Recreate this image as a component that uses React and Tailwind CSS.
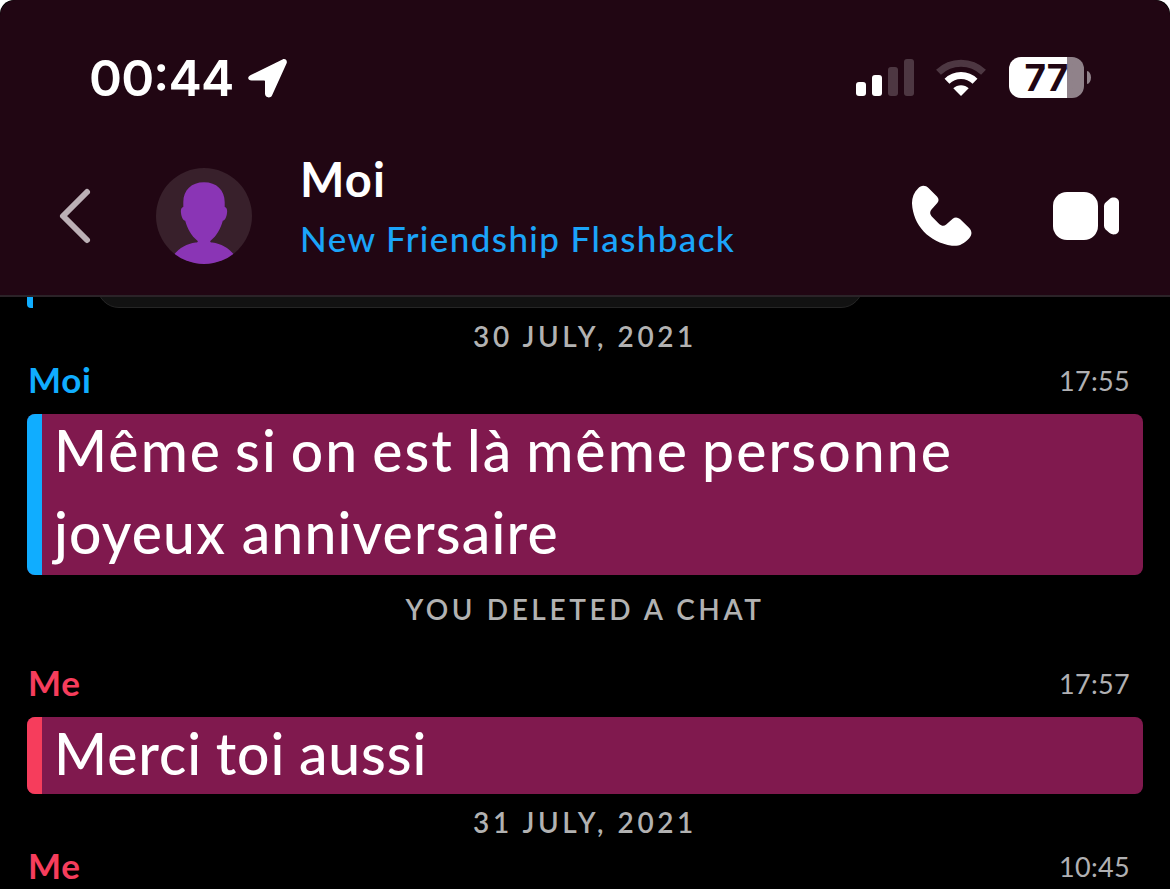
function StatusBar() {
    return (
        <div className="flex h-[148px] items-start pt-[54px] pr-[79px] pl-[89px]">
            <span className="h-12 w-[144px] font-['Inter','Liberation_Sans',sans-serif] text-[50px] leading-[48px] font-semibold tracking-[-0.8px] text-white [font-feature-settings:'case']">
                00:44
            </span>
            <svg className="mt-[4px] ml-[14px] h-[41px] w-[41px]" viewBox="0 0 41 41" fill="#fff">
                <path d="M3.800 17 35.500 1.400c2.900-1.200 5.300 1.200 4 4.100L25 37.400c-1.600 3.300-7 2.300-7-1.600V23.300c0-.5-.3-.8-.8-.8H4.600C.6 22.500-.1 18.700 3.800 17Z" />
            </svg>
            <div className="ml-auto flex items-start">
                <svg className="mt-[4px] h-[40px] w-[60px]" viewBox="0 0 60 40" fill="#fff">
                    <rect x="1" y="24" width="10" height="14" rx="3" />
                    <rect x="17" y="17" width="10" height="21" rx="3" />
                    <rect x="33" y="9" width="10" height="29" rx="3" opacity=".2" />
                    <rect x="49" y="1" width="10" height="37" rx="3" opacity=".2" />
                </svg>
                <svg className="mt-[4px] ml-[20px] h-[40px] w-[52px]" viewBox="0 0 52 40" fill="none" stroke="#fff">
                    <path d="M3.500 14.200a32.500 32.500 0 0 1 45 0" strokeWidth="7" opacity=".2" />
                    <path d="M12 23.200a20 20 0 0 1 28 0" strokeWidth="7" />
                    <path d="M26 38 18.300 30.300c4.200-4.100 11.200-4.100 15.400 0Z" fill="#fff" stroke="none" />
                </svg>
                <div className="mt-[3px] ml-[22px] flex items-center">
                    <div className="flex h-[41px] w-[75px] items-center justify-center rounded-[12px] bg-linear-to-r from-white from-[77.500%] to-[#90828a] to-[77.500%]">
                        <span className="font-['Inter','Liberation_Sans',sans-serif] text-[37px] leading-none font-bold text-[#210613]">77</span>
                    </div>
                    <div className="ml-[3px] h-[13px] w-[4px] rounded-[0_100%_100%_0/0_50%_50%_0] bg-[#90828a]" />
                </div>
            </div>
        </div>
    )
}

function ChatHeader() {
    return (
        <div className="flex h-[147px] pl-[58px]">
            <svg className="mt-[38px] h-[60px] w-[34px]" viewBox="0 0 34 60" fill="none" stroke="#bcb0b6" strokeWidth="6" strokeLinecap="round" strokeLinejoin="round">
                <path d="M29 6 5 30l24 24" />
            </svg>
            <svg className="mt-[20px] ml-[64px] h-24 w-24" viewBox="0 0 96 96">
                <defs>
                    <clipPath id="avatar">
                        <circle cx="48" cy="48" r="48" />
                    </clipPath>
                </defs>
                <g clipPath="url(#avatar)">
                    <rect width="96" height="96" fill="#38202b" />
                    <path
                        fill="#8a35b5"
                        d="M48 14.200c12.500 0 20.700 7.800 20.700 19.800v5c2.300.8 2.700 3 2.300 6-.4 4-2 7.300-4.200 7.800C64.500 61 61 67.500 54.300 73c-.3 1 .5 1.300 2 1.500C65 75.500 72.500 80 78 86.500V96H18v-9.500c5.500-6.500 13-11 21.700-12 1.500-.2 2.300-.5 2-1.500C35 67.500 31.500 61 29.200 52.800c-2.200-.5-3.800-3.800-4.200-7.800-.4-3 0-5.200 2.300-6v-5c0-12 8.200-19.800 20.700-19.800Z"
                    />
                </g>
            </svg>
            <div className="ml-[48px] flex flex-col">
                <span className="mt-[3px] h-[56px] text-[47px] leading-[56px] font-bold tracking-[1.100px] text-white">Moi</span>
                <span className="mt-[10px] h-[42px] text-[35px] leading-[42px] font-medium tracking-[1.400px] whitespace-nowrap text-[#1ba4f9]">
                    New Friendship Flashback
                </span>
            </div>
            <div className="mr-[50px] ml-auto flex">
                <svg className="mt-[37px] h-[62px] w-[62px]" viewBox="0 0 62 62" fill="#fff">
                    <path d="M7 3.500C10-.2 14.500 0 17.500 3L26 11.500c2 2.300 2 4.500.3 6.600l-5.800 6.400c-1.800 2.200-1.800 4.300.3 7l7.400 7.400c2.700 2.300 4.800 2.300 7 .5l6.500-5.600c2.200-1.700 4.800-1.700 7.300.3l9 8.700c3 3 3.500 7 0 10.600-5.500 5.800-10.500 8.100-17 7.300C18 57.500 2 40 1 18.500.9 12.500 3 7.500 7 3.500Z" />
                </svg>
                <svg className="mt-[43px] ml-[79px] h-[50px] w-[68px]" viewBox="0 0 68 50" fill="#fff">
                    <rect x="1" y="1" width="45" height="48" rx="14" />
                    <path d="M52 15.500c0-1.500.5-2.800 1.600-3.900l4-3.700C61 5.300 67 6.500 67 11.500v27c0 5-6 6.200-9.400 3.600l-4-3.700c-1.100-1.100-1.600-2.400-1.600-3.900Z" />
                </svg>
            </div>
        </div>
    )
}

function Notice({ children }) {
    return (
        <div className="flex h-14 items-center justify-center text-[28px] leading-none font-semibold tracking-[3.600px] text-[#b2b2b2]">
            <span className="-mt-px">{children}</span>
        </div>
    )
}

function Sender({ name, time, color }) {
    return (
        <div className="mb-4 flex h-[34px] items-center justify-between pr-[40px] pl-[28px]">
            <span className={`-mt-[4px] text-[35px] leading-[34px] font-bold tracking-[0.700px] ${color}`}>{name}</span>
            <span className="text-[27px] leading-[34px] tracking-[0.300px] text-[#b0b0b3]">{time}</span>
        </div>
    )
}

function Message({ bar, size, children }) {
    return (
        <div className={`mr-[27px] ml-[27px] flex overflow-hidden rounded-[8px] bg-[#80194e] ${size}`}>
            <div className={`w-[15px] shrink-0 ${bar}`} />
            <div className="-mt-[5px] ml-[12px] text-[57px] leading-[82px] font-medium whitespace-nowrap text-white">{children}</div>
        </div>
    )
}

export default function App() {
    return (
        <div className="h-[889px] w-[1170px] overflow-hidden bg-white font-['Lato','Liberation_Sans',sans-serif]">
            <div className="h-full overflow-hidden rounded-t-[14px] bg-black">
                <header className="h-[297px] rounded-t-[16px] border-b-2 border-[#2b2328] bg-[#210613]">
                    <StatusBar />
                    <ChatHeader />
                </header>
                <div className="flex h-[11px] items-end overflow-hidden">
                    <div className="ml-[27px] h-[11px] w-[6px] rounded-bl-[4px] bg-[#10adff]" />
                    <div className="-mt-[50px] ml-[64px] h-[60px] w-[766px] rounded-[22px] border border-[#262626] bg-[#121212]" />
                </div>
                <Notice>30 JULY, 2021</Notice>
                <Sender name="Moi" time="17:55" color="text-[#10adff]" />
                <Message bar="bg-[#10adff]" size="h-[161px]">
                    <p className="tracking-[2.100px] [word-spacing:-3.600px]">Même si on est là même personne</p>
                    <p className="tracking-[1.200px]">joyeux anniversaire</p>
                </Message>
                <div className="mb-[24px] pt-[6px] pb-[6px]">
                    <Notice>YOU DELETED A CHAT</Notice>
                </div>
                <Sender name="Me" time="17:57" color="text-[#f63d5c]" />
                <Message bar="bg-[#f63d5c]" size="h-[77px]">
                    <p className="tracking-[0.900px] [word-spacing:-1.500px]">Merci toi aussi</p>
                </Message>
                <Notice>31 JULY, 2021</Notice>
                <Sender name="Me" time="10:45" color="text-[#f63d5c]" />
            </div>
        </div>
    )
}
